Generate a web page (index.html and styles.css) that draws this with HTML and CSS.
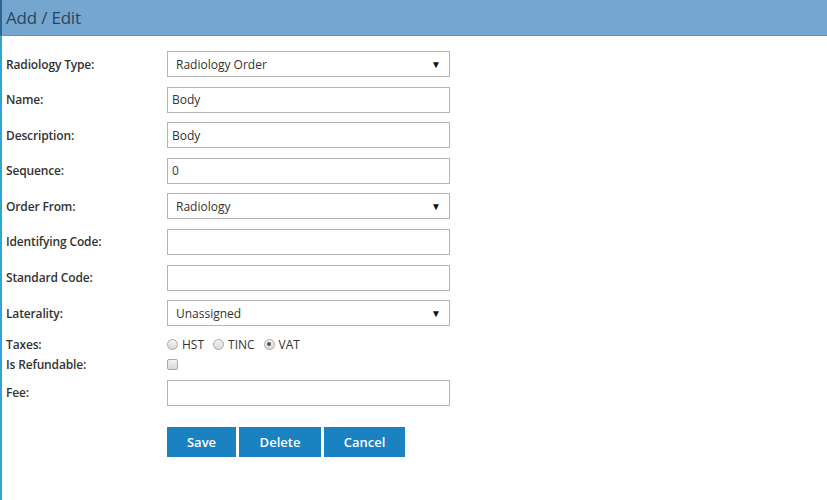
FILE: index.html
```html
<!DOCTYPE html>
<html>
<head>
<meta charset="utf-8">
<link rel="stylesheet" href="styles.css">
</head>
<body>
<div class="header"><h1 class="title">Add / Edit</h1></div>
<div class="panel">
  <form class="form">
    <div class="row">
      <label class="label">Radiology Type:</label>
      <div class="select"><span>Radiology Order</span><span class="arrow">&#9660;</span></div>
    </div>
    <div class="row">
      <label class="label">Name:</label>
      <div class="input">Body</div>
    </div>
    <div class="row">
      <label class="label">Description:</label>
      <div class="input">Body</div>
    </div>
    <div class="row">
      <label class="label">Sequence:</label>
      <div class="input">0</div>
    </div>
    <div class="row">
      <label class="label">Order From:</label>
      <div class="select"><span>Radiology</span><span class="arrow">&#9660;</span></div>
    </div>
    <div class="row">
      <label class="label">Identifying Code:</label>
      <div class="input"></div>
    </div>
    <div class="row">
      <label class="label">Standard Code:</label>
      <div class="input"></div>
    </div>
    <div class="row">
      <label class="label">Laterality:</label>
      <div class="select"><span>Unassigned</span><span class="arrow">&#9660;</span></div>
    </div>
    <div class="row small taxes">
      <label class="label">Taxes:</label>
      <div class="radios">
        <span class="radio"></span><span class="rlabel">HST</span>
        <span class="radio"></span><span class="rlabel">TINC</span>
        <span class="radio checked"></span><span class="rlabel">VAT</span>
      </div>
    </div>
    <div class="row small refund">
      <label class="label">Is Refundable:</label>
      <span class="check"></span>
    </div>
    <div class="row fee">
      <label class="label">Fee:</label>
      <div class="input"></div>
    </div>
    <div class="buttons">
      <span class="btn btn-save">Save</span>
      <span class="btn btn-delete">Delete</span>
      <span class="btn btn-cancel">Cancel</span>
    </div>
  </form>
</div>
</body>
</html>
```
FILE: styles.css
```css
html, body {
  margin: 0;
  padding: 0;
  background: #ffffff;
  font-family: "Open Sans", "Noto Sans", sans-serif;
  color: #333333;
}
body {
  width: 827px;
  height: 500px;
  overflow: hidden;
}
.header {
  height: 35px;
  background: #74a6d0;
  border-bottom: 1px solid #6490b8;
  border-left: 2px solid #2c6590;
  display: flex;
  align-items: center;
}
.title {
  margin: 0;
  padding-left: 4px;
  font-size: 17px;
  font-weight: normal;
  color: #2b4560;
  letter-spacing: -0.2px;
}
.panel {
  border-left: 2px solid #2fa4d6;
  height: 464px;
}
.form {
  padding: 15px 0 0 4px;
  display: flex;
  flex-direction: column;
}
.row {
  display: flex;
  align-items: center;
  height: 26px;
  margin-bottom: 9.6px;
}
.label {
  width: 161px;
  font-size: 12px;
  font-weight: 600;
  color: #333;
  letter-spacing: -0.15px;
}
.input, .select {
  box-sizing: border-box;
  width: 283px;
  height: 26px;
  border: 1px solid #b4b4b4;
  background: #fff;
  font-size: 12px;
  color: #333;
  display: flex;
  align-items: center;
  padding-left: 4px;
}
.select {
  padding-left: 8px;
  padding-right: 8px;
  justify-content: space-between;
}
.arrow {
  font-size: 10px;
  color: #111;
}
.taxes {
  height: 16px;
  margin-top: 0.5px;
  margin-bottom: 4px;
}
.radios {
  display: flex;
  align-items: center;
  font-size: 12px;
  color: #333;
}
.radio {
  box-sizing: border-box;
  width: 11px;
  height: 11px;
  border-radius: 50%;
  border: 1px solid #a8a8a8;
  background: linear-gradient(#f4f4f4, #d8d8d8);
  margin-right: 4px;
  position: relative;
}
.radio.checked::after {
  content: "";
  position: absolute;
  left: 2.5px;
  top: 2.5px;
  width: 4px;
  height: 4px;
  border-radius: 50%;
  background: #555;
}
.rlabel {
  margin-right: 9px;
}
.refund {
  height: 16px;
  margin-bottom: 7.5px;
}
.check {
  box-sizing: border-box;
  width: 11px;
  height: 11px;
  border: 1px solid #a8a8a8;
  border-radius: 2px;
  background: linear-gradient(#f4f4f4, #d8d8d8);
}
.fee {
  margin-bottom: 21px;
}
.buttons {
  display: flex;
  padding-left: 161px;
  gap: 3px;
}
.btn {
  display: flex;
  align-items: center;
  justify-content: center;
  height: 30px;
  background: #1a82c0;
  color: #ffffff;
  font-size: 13px;
  font-weight: 600;
}
.btn-save { width: 69px; }
.btn-delete { width: 82px; }
.btn-cancel { width: 81px; }
```
